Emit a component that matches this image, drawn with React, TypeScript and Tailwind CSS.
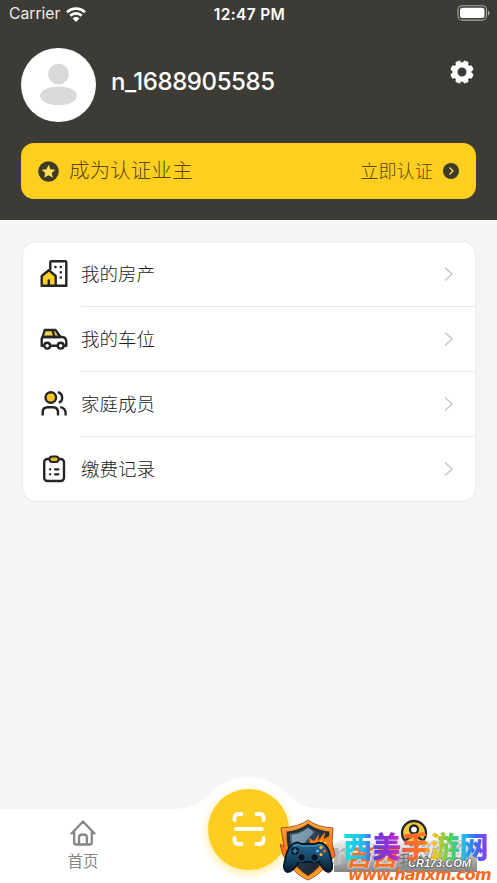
import React from 'react';
import clsx from 'clsx';

const cjk = "font-['Noto_Sans_CJK_SC',sans-serif]";

const StatusBar: React.FC = () => (
  <div className="h-7 pl-[9px] pr-[7px] grid grid-cols-3 items-center text-white font-['Inter',sans-serif]">
    <div className="flex items-center gap-[6px]">
      <span className="text-[15.7px] leading-5 text-white/90">Carrier</span>
      <svg className="w-[20px] h-[15px]" viewBox="0 0 20 15" fill="none" stroke="white" strokeWidth="2.7">
        <path d="M1 5.3a12.7 12.7 0 0 1 18 0" />
        <path d="M4.3 8.8a8 8 0 0 1 11.4 0" />
        <path d="M10 15l-3.4-3.6a4.8 4.8 0 0 1 6.8 0z" fill="white" stroke="none" />
      </svg>
    </div>
    <span className="text-[15.5px] leading-5 pt-px font-semibold tracking-[0.35px] text-center whitespace-nowrap">12:47 PM</span>
    <svg className="w-[33px] h-[16px] justify-self-end -translate-y-px" viewBox="0 0 33 16" fill="none">
      <rect x="1" y=".7" width="28.5" height="14.4" rx="4.2" stroke="#aaa9a4" strokeWidth="1.1" />
      <rect x="3" y="2.7" width="24.5" height="10.4" rx="2.6" fill="white" />
      <path d="M31 5.5c2 .7 2 4.2 0 4.9z" fill="#aaa9a4" />
    </svg>
  </div>
);

const HouseIcon = () => (
  <svg className="w-7 h-7" viewBox="0 0 28 28" fill="none" stroke="#252525" strokeWidth="2.4" strokeLinejoin="round" strokeLinecap="round">
    <path d="M10.3 9V2.3Q10.3 1.3 11.3 1.3H25.3Q26.3 1.3 26.3 2.3V25.8H15" />
    <path d="M1.7 25.8V16L8.8 10.2L15.7 16V25.8z" fill="#ffcf27" />
    <path d="M8.8 25V20.5" />
    <path d="M15.4 7h.1M20.7 7h.1M20.7 12.3h.1M20.7 17.6h.1" strokeWidth="2.5" />
  </svg>
);

const CarIcon = () => (
  <svg className="w-7 h-7" viewBox="0 0 28 28" fill="none" stroke="#252525" strokeWidth="2.4" strokeLinejoin="round" strokeLinecap="round">
    <path d="M2.5 12L4.8 5H15.5L20.5 12z" fill="#eed14b" />
    <path d="M12.5 5.5L14.5 12" />
    <path d="M4 20.7H1.7V14.5Q1.7 12 4 12H22Q26.3 12.5 26.3 16.5V20.7H24M10.5 20.7H17.5" />
    <circle cx="7.2" cy="20.7" r="2.9" fill="white" />
    <circle cx="20.7" cy="20.7" r="2.9" fill="white" />
  </svg>
);

const FamilyIcon = () => (
  <svg className="w-7 h-7" viewBox="0 0 28 28" fill="none" stroke="#252525" strokeWidth="2.4">
    <circle cx="10.8" cy="7.5" r="5.3" fill="#fbc52d" />
    <path d="M17.8 2.3a5.4 5.4 0 0 1 1 10.3" />
    <path d="M2.7 25.5V22.5Q2.7 17.3 7.7 17.3H13Q18 17.3 18 22.5V25.5" />
    <path d="M20.2 17.1Q25.3 18 25.6 22.5V25.5" />
  </svg>
);

const RecordIcon = () => (
  <svg className="w-7 h-7" viewBox="0 0 28 28" fill="none" stroke="#252525" strokeWidth="2.4" strokeLinecap="round">
    <rect x="4.2" y="4" width="19.8" height="22" rx="3.3" />
    <rect x="9.5" y="1.6" width="9.2" height="5.4" rx="2.7" fill="#e2bd29" strokeWidth="2" />
    <path d="M9.9 14.3h.3M9.9 19.3h.3M15 14.3h3.5M15 19.3h3.5" strokeWidth="2.2" />
  </svg>
);

const menuItems = [
  { label: '我的房产', Icon: HouseIcon },
  { label: '我的车位', Icon: CarIcon },
  { label: '家庭成员', Icon: FamilyIcon },
  { label: '缴费记录', Icon: RecordIcon },
];

const Header: React.FC = () => (
  <header className="h-[219.5px] bg-[#3d3b35]">
    <StatusBar />
    <div className="flex px-[21px] pt-5">
      <div className="w-[75px] h-[74px] rounded-full bg-white flex justify-center">
        <svg className="w-full h-full" viewBox="0 0 75 75" fill="#d9d9d9">
          <circle cx="37.5" cy="26.5" r="10.5" />
          <ellipse cx="37.5" cy="48.5" rx="18.7" ry="9.5" />
        </svg>
      </div>
      <h1 className="ml-[15px] pt-[18px] text-[24px] leading-8 font-medium tracking-[-0.4px] text-white font-['Inter',sans-serif]">n_1688905585</h1>
      <svg className="ml-auto mt-[12px] mr-[2px] w-6 h-6" viewBox="-12 -12 24 24">
        <circle r="7.1" fill="none" stroke="white" strokeWidth="5.2" />
        {[22.5, 67.5, 112.5, 157.5, 202.5, 247.5, 292.5, 337.5].map((angle) => (
          <rect key={angle} x="-2.7" y="-11.6" width="5.4" height="4.5" rx="1.3" fill="white" transform={`rotate(${angle})`} />
        ))}
      </svg>
    </div>
    <div className={clsx('mx-[21px] mt-[21px] h-14 rounded-[13px] bg-[#ffcf20] flex items-center px-[17px] text-[#5a4710] font-light', cjk)}>
      <svg className="w-[21px] h-[21px]" viewBox="0 0 21 21">
        <circle cx="10.5" cy="10.5" r="10.3" fill="#3d3b25" />
        <path d="M10.5 3.8l2 4.5 4.9.5-3.7 3.2 1.1 4.8-4.3-2.5-4.3 2.5 1.1-4.8-3.7-3.2 4.9-.5z" fill="#ffdf58" />
      </svg>
      <span className="ml-[10px] pb-[4px] text-[20.6px] leading-8">成为认证业主</span>
      <span className="ml-auto pb-[2px] text-[18.2px] leading-8">立即认证</span>
      <svg className="ml-[10px] w-4 h-4" viewBox="0 0 16 16" fill="none">
        <circle cx="8" cy="8" r="8" fill="#3d3b25" />
        <path d="M6.5 4.5L10 8l-3.5 3.5" stroke="#ffdf69" strokeWidth="1.3" />
      </svg>
    </div>
  </header>
);

const Menu: React.FC = () => (
  <section className={clsx('mx-[22.5px] mt-[22px] h-[259px] rounded-[13px] bg-white ring-1 ring-[#ebebeb] overflow-hidden font-light', cjk)}>
    {menuItems.map(({ label, Icon }, i) => (
      <div key={label} className={clsx('flex items-center pl-[17.5px]', i < 3 ? 'h-[65px]' : 'h-[64px]')}>
        <Icon />
        <div className={clsx('ml-[13px] h-full flex-1 flex items-center justify-between pr-[21px]', i < 3 && 'border-b border-[#e9e9e9]')}>
          <span className="pb-[2px] text-[18.5px] leading-7 text-[#222]">{label}</span>
          <svg className="w-[11px] h-4" viewBox="0 0 11 16" fill="none" stroke="#c9c9c9" strokeWidth="1.6">
            <path d="M2 1.5L9 8l-7 6.5" />
          </svg>
        </div>
      </div>
    ))}
  </section>
);

const GamepadBadge = () => (
  <svg className="absolute left-[280px] top-[43px] w-[56px] h-[62px]" viewBox="0 0 56 62">
    <defs>
      <linearGradient id="flame" x1="0" y1="0" x2="0" y2="1">
        <stop offset="0" stopColor="#ffb747" />
        <stop offset=".5" stopColor="#ff7015" />
        <stop offset="1" stopColor="#ffb02d" />
      </linearGradient>
      <linearGradient id="shield" x1="0" y1="0" x2="1" y2="1">
        <stop offset="0" stopColor="#567e9e" />
        <stop offset=".5" stopColor="#26394a" />
        <stop offset="1" stopColor="#101d2b" />
      </linearGradient>
      <linearGradient id="pad" x1="0" y1="0" x2="0" y2="1">
        <stop offset="0" stopColor="#276b96" />
        <stop offset=".6" stopColor="#123f61" />
        <stop offset="1" stopColor="#08192a" />
      </linearGradient>
    </defs>
    <path d="M28 1Q37 8 53 9L52 23L55 37L48 44Q40 56 28 61Q16 56 9 45L3 36L0 25L4 28L1 9Q19 8 28 1z" fill="url(#flame)" stroke="#8e3110" strokeWidth=".8" />
    <path d="M28 4Q38 11 50 12Q52 43 28 58Q4 43 6 12Q19 11 28 4z" fill="#252d35" stroke="#fb8b22" strokeWidth="1.5" />
    <path d="M28 8Q37 14 46 15Q47 40 28 54Q9 40 10 15Q20 14 28 8z" fill="url(#shield)" />
    <path d="M12 16Q21 15 28 9L34 13L16 34Q11 25 12 16z" fill="#a9c5d5" opacity=".6" />
    <path d="M24 30L30 24L29 19L34 22L39 15L38 22L45 13L44 20L51 16L48 30z" fill="#ff7c12" />
    <path d="M31 29L35 24L36 26L42 20L41 25L47 22L44 31z" fill="#ffca34" />
    <path d="M13 25Q17 22 21 25L35 25Q41 22 45 26Q50 30 52 45Q53 53 48 53Q44 52 39 43L19 43Q12 54 7 53Q2 51 5 41Q7 29 13 25z" fill="url(#pad)" stroke="#071827" strokeWidth="1.8" />
    <path d="M13 27Q18 24 22 27H35Q41 24 44 28" fill="none" stroke="#49a7d2" strokeWidth="1" />
    <circle cx="15" cy="32" r="4" fill="#081a29" />
    <path d="M15 29.5v5M12.5 32h5" stroke="#2a90bf" strokeWidth="1.5" />
    <circle cx="21.5" cy="38.5" r="4" fill="#081625" stroke="#2a6587" />
    <circle cx="34.5" cy="38.5" r="4" fill="#081625" stroke="#2a6587" />
    <circle cx="41" cy="28.5" r="1.6" fill="#ffc925" />
    <circle cx="37.5" cy="32" r="1.6" fill="#30bbf0" />
    <circle cx="44.5" cy="32" r="1.6" fill="#ff5b32" />
    <circle cx="41" cy="35.5" r="1.6" fill="#ffc12d" />
  </svg>
);

const Watermark: React.FC = () => (
  <>
    <div className="absolute left-[334px] top-[64px] w-[143px] h-[32px] bg-linear-to-b from-[#c8c8c833] to-[#858585] rounded-tl-lg" />
    <span className="absolute left-[331px] top-[59px] text-[34px] leading-9 font-bold text-[#b4b4b4] [text-shadow:0_0_2px_#fff] font-['Liberation_Serif',serif]">r</span>
    <div className={clsx('absolute left-[347px] top-[66px] flex items-center gap-[9px] font-black italic leading-7 whitespace-nowrap', cjk)}>
      <span className="text-[23px] tracking-[3px] text-[#f4702b] [text-shadow:0_0_2px_#fff,0_0_2px_#fff]">西西</span>
      <span className="text-[18px] text-[#e8e8e8] [text-shadow:0_0_2px_#666] -translate-y-2">软件园</span>
    </div>
    <span className="absolute left-[408px] top-[79px] text-[11px] leading-4 font-bold italic text-white [text-shadow:0_0_2px_#222,0_0_1px_#222] font-['Liberation_Sans',sans-serif]">CR173.COM</span>
    <GamepadBadge />
    <div className={clsx('absolute left-[343px] top-[51px] text-[29.1px] leading-9 font-black whitespace-nowrap', cjk)}>
      <span className="bg-clip-text text-transparent bg-[linear-gradient(90deg,#18e2df_0%,#27b9ed_14%,#6438dc_22%,#b52dca_37%,#ff6331_44%,#ff7723_55%,#ffc222_62%,#51d450_74%,#20bce8_83%,#396ef2_91%,#9936e8_100%)]">西美手游网</span>
    </div>
    <span className="absolute left-[348px] top-[91px] text-[16px] leading-4 tracking-[-0.8px] font-bold italic text-[#fb6a21] font-['DejaVu_Sans',sans-serif]">www.hanxm.com</span>
  </>
);

const TabBar: React.FC = () => (
  <nav className="relative h-[107px] overflow-hidden">
    <svg className="absolute inset-0 w-full h-full" viewBox="0 0 497 107" fill="white">
      <path d="M0 33H175Q193 33 207 20Q226 1 248.5 1Q271 1 290 20Q304 33 323 33H497V107H0z" />
    </svg>
    <div className="relative ml-[57px] pt-[43px] w-[52px] flex flex-col items-center text-[#868686]">
      <svg className="w-7 h-7" viewBox="0 0 28 28" fill="none" stroke="currentColor" strokeWidth="2.3" strokeLinejoin="round" strokeLinecap="round">
        <path d="M2.5 14.5L14 2.5L25.5 14.5M5.2 12V23.5Q5.2 25.5 7.2 25.5H20.8Q22.8 25.5 22.8 23.5V12M10 25V18.5Q10 15.5 14 15.5Q18 15.5 18 18.5V25" />
      </svg>
      <span className={clsx('mt-[3px] text-[15.5px] leading-5', cjk)}>首页</span>
    </div>
    <div className="absolute left-[208px] top-[12.5px] w-[81px] h-[81px] rounded-full bg-[#ffcd22] shadow-[0_3px_10px_#ffd64299] flex items-center justify-center">
      <svg className="w-[34px] h-[34px]" viewBox="0 0 34 34" fill="none" stroke="white" strokeWidth="3.8" strokeLinecap="round">
        <path d="M2.500 8V6Q2.500 2 6.500 2H9.500M24.500 2H27.500Q31.500 2 31.500 6V8M2.500 26V28Q2.500 32 6.500 32H9.500M24.500 32H27.500Q31.500 32 31.500 28V26M4 17H30" />
      </svg>
    </div>
    <svg className="absolute left-[400px] top-[43px] w-[28px] h-[28px]" viewBox="0 0 28 28" stroke="#252525" strokeWidth="2.300" fill="#eec83a">
      <circle cx="14" cy="14" r="12" />
      <circle cx="14" cy="10.500" r="4" fill="white" />
      <path d="M5 22Q14 13 23 22" />
    </svg>
    <span className={clsx('absolute left-[399px] top-[74px] text-[15px] leading-5 text-[#333]', cjk)}>我的</span>
    <Watermark />
  </nav>
);

const App: React.FC = () => (
  <div className="w-full h-[883px] bg-[#f5f5f5] flex flex-col overflow-hidden">
    <Header />
    <Menu />
    <div className="mt-auto">
      <TabBar />
    </div>
  </div>
);

export default App;
